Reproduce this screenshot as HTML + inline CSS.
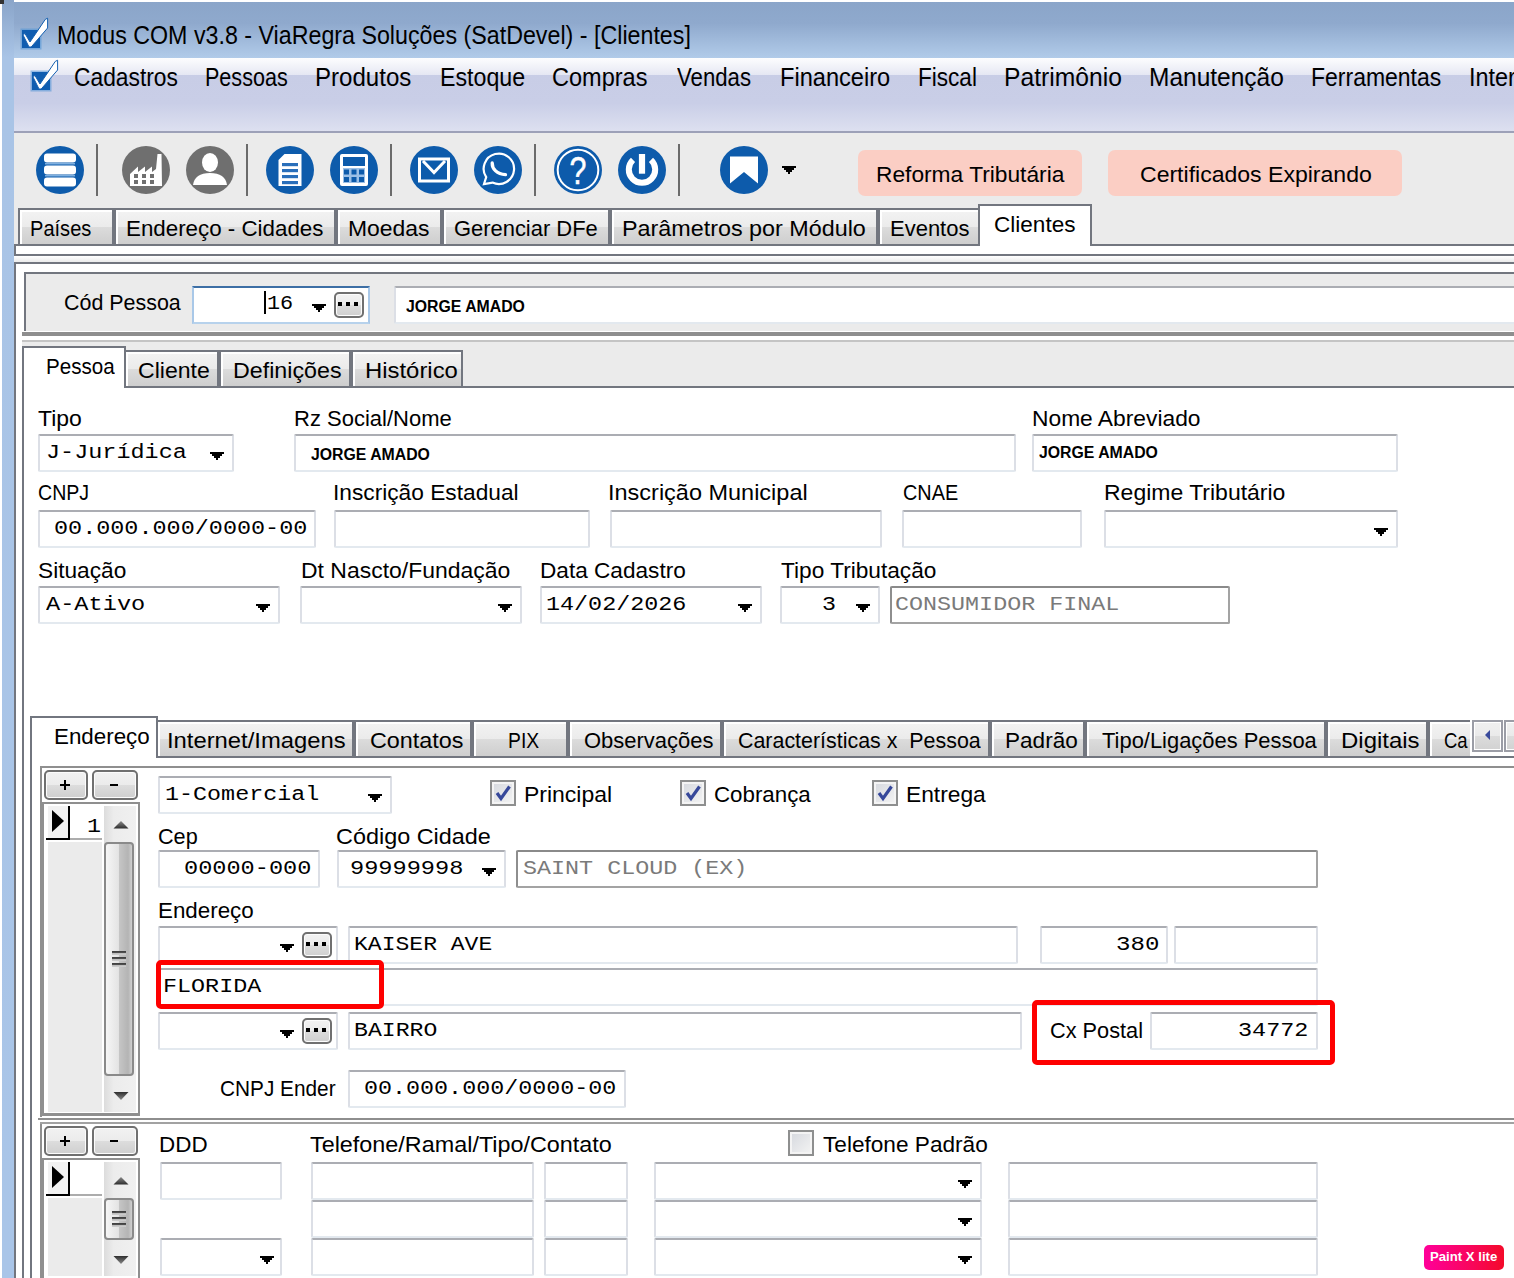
<!DOCTYPE html>
<html><head><meta charset="utf-8"><title>Clientes</title><style>
html,body{margin:0;padding:0}
body{width:1514px;height:1278px;position:relative;overflow:hidden;background:#fff;font-family:"Liberation Sans",sans-serif;color:#000}
.a{position:absolute;box-sizing:border-box}
.t{position:absolute;white-space:pre;line-height:1;transform-origin:0 0}
.f{position:absolute;box-sizing:border-box;background:#fff;border-radius:2px;border:2px solid #dcdfe6;border-top-color:#abadb3;border-bottom-color:#e3e9ef}
.fd{position:absolute;box-sizing:border-box;background:#fff;border-radius:2px;border:2px solid #a3a3a3;border-top-color:#8a8a8a;border-left-color:#8e8e8e}
.tab{position:absolute;box-sizing:border-box;border:2px solid #72767f;border-bottom:none;background:linear-gradient(#f3f3f3 0,#ebebeb 50%,#dcdcdc 50%,#cecece 100%);box-shadow:inset 2px 2px 0 #fff}
.tabon{position:absolute;box-sizing:border-box;border:2px solid #72767f;border-bottom:none;background:#fff}
.btn{position:absolute;box-sizing:border-box;border:2px solid #707070;border-radius:5px;background:linear-gradient(#f2f2f2 0,#ebebeb 50%,#dddddd 50%,#cfcfcf 100%);box-shadow:inset 0 0 0 1px #fcfcfc}
.ar{position:absolute;width:0;height:0;border-left:7px solid transparent;border-right:7px solid transparent;border-top:7px solid #000}
.ar:before{content:"";position:absolute;left:-7px;top:-8px;width:14px;height:2px;background:#000}
.cb{position:absolute;box-sizing:border-box;width:26px;height:26px;border:2px solid #8e8f8f;background:linear-gradient(135deg,#d5d8de,#f4f4f4);box-shadow:inset 0 0 0 2px #f4f4f4}
</style></head><body>
<div class="a" style="left:0px;top:0px;width:1514px;height:58px;background:linear-gradient(#8aa5c9 0,#8fa9cd 40%,#a6c0e0 80%,#b1cbe9 100%)"></div>
<div class="a" style="left:0px;top:0px;width:1514px;height:2px;background:#fff"></div>
<div class="a" style="left:0px;top:0px;width:14px;height:1278px;background:linear-gradient(#8aa5c9 0,#a9c4e6 58px,#a9c5e8 100%)"></div>
<div class="a" style="left:0px;top:0px;width:2px;height:1278px;background:#fff"></div>
<div class="a" style="left:0px;top:0px;width:4px;height:4px;background:#333"></div>
<div class="a" style="left:14px;top:58px;width:1500px;height:75px;background:linear-gradient(#fdfdfe 0,#e5e7f3 17px,#c8cde6 17px,#c9cee7 45px,#dde0f0 73px,#9da1b8 73px,#9da1b8 75px)"></div>
<div class="a" style="left:14px;top:133px;width:1500px;height:112px;background:#ebebeb"></div>
<svg class="a" style="left:18px;top:16px" width="34" height="36" viewBox="-4 -14 34 36">
<rect x="-1.5" y="-1.5" width="21" height="21" fill="#4f93d6" opacity="0.55"/>
<rect x="0" y="0" width="18" height="18" fill="#0f5db0"/>
<path d="M0.8 4.6 L3 3.6 L8 12 L23.3 -10.6 L25.6 -11.8 L25.6 -2 L9.2 17 L7 17 Z" fill="#fff" stroke="#1560b0" stroke-width="1"/>
</svg>
<svg class="a" style="left:28px;top:58px" width="34" height="36" viewBox="-4 -14 34 36">
<rect x="-1.5" y="-1.5" width="21" height="21" fill="#4f93d6" opacity="0.55"/>
<rect x="0" y="0" width="18" height="18" fill="#0f5db0"/>
<path d="M0.8 4.6 L3 3.6 L8 12 L23.3 -10.6 L25.6 -11.8 L25.6 -2 L9.2 17 L7 17 Z" fill="#fff" stroke="#1560b0" stroke-width="1"/>
</svg>
<div class="t" style="left:57.21px;top:22px;font-size:26px;transform:scaleX(0.8940);">Modus COM v3.8 - ViaRegra Soluções (SatDevel) - [Clientes]</div>
<div class="t" style="left:74.12px;top:64px;font-size:26px;transform:scaleX(0.8766);">Cadastros</div>
<div class="t" style="left:204.84px;top:64px;font-size:26px;transform:scaleX(0.8289);">Pessoas</div>
<div class="t" style="left:315.15px;top:64px;font-size:26px;transform:scaleX(0.9259);">Produtos</div>
<div class="t" style="left:439.71px;top:64px;font-size:26px;transform:scaleX(0.8930);">Estoque</div>
<div class="t" style="left:552.10px;top:64px;font-size:26px;transform:scaleX(0.9045);">Compras</div>
<div class="t" style="left:677.00px;top:64px;font-size:26px;transform:scaleX(0.8531);">Vendas</div>
<div class="t" style="left:779.68px;top:64px;font-size:26px;transform:scaleX(0.9081);">Financeiro</div>
<div class="t" style="left:917.76px;top:64px;font-size:26px;transform:scaleX(0.8677);">Fiscal</div>
<div class="t" style="left:1003.60px;top:64px;font-size:26px;transform:scaleX(0.9482);">Patrimônio</div>
<div class="t" style="left:1149.12px;top:64px;font-size:26px;transform:scaleX(0.9421);">Manutenção</div>
<div class="t" style="left:1311.23px;top:64px;font-size:26px;transform:scaleX(0.8839);">Ferramentas</div>
<div class="t" style="left:1468.70px;top:64px;font-size:26px;transform:scaleX(0.9004);">Interfaces</div>
<svg class="a" style="left:36px;top:146px" width="48" height="48" viewBox="0 0 48 48"><circle cx="24" cy="24" r="24" fill="#0d5bab"/><rect x="8" y="7.5" width="32" height="9" rx="3" fill="#fff"/><rect x="8" y="19.5" width="32" height="9" rx="3" fill="#fff"/><rect x="8" y="31.5" width="32" height="9" rx="3" fill="#fff"/><rect x="9" y="17" width="30" height="1.5" fill="#7fb0e0"/><rect x="9" y="29" width="30" height="1.5" fill="#7fb0e0"/></svg>
<svg class="a" style="left:122px;top:146px" width="48" height="48" viewBox="0 0 48 48"><circle cx="24" cy="24" r="24" fill="#6f6f6f"/><path d="M8 40 V28 L16 20.5 V26 L23 20.5 V26 L30 20.5 V26 L34 23 L35.5 8 H39.5 L40 40 Z" fill="#fff"/><rect x="12" y="28" width="4" height="4" fill="#6f6f6f"/><rect x="12" y="34" width="4" height="4" fill="#6f6f6f"/><rect x="20" y="28" width="4" height="4" fill="#6f6f6f"/><rect x="20" y="34" width="4" height="4" fill="#6f6f6f"/><rect x="28" y="28" width="4" height="4" fill="#6f6f6f"/><rect x="28" y="34" width="4" height="4" fill="#6f6f6f"/></svg>
<svg class="a" style="left:186px;top:146px" width="48" height="48" viewBox="0 0 48 48"><circle cx="24" cy="24" r="24" fill="#6f6f6f"/><ellipse cx="24" cy="16.5" rx="8" ry="9.5" fill="#fff"/><path d="M7 39 C8 31 14 27 24 27 C34 27 40 31 41 39 Z" fill="#fff"/></svg>
<svg class="a" style="left:266px;top:146px" width="48" height="48" viewBox="0 0 48 48"><circle cx="24" cy="24" r="24" fill="#0d5bab"/><path d="M12.5 40 V14 L18.5 8 H35.5 V40 Z" fill="#fff"/><rect x="16" y="17" width="16" height="3.2" fill="#2a6fba"/><rect x="16" y="23" width="16" height="3.2" fill="#2a6fba"/><rect x="16" y="29" width="16" height="3.2" fill="#2a6fba"/><rect x="16" y="35" width="16" height="3.2" fill="#2a6fba"/></svg>
<svg class="a" style="left:330px;top:146px" width="48" height="48" viewBox="0 0 48 48"><circle cx="24" cy="24" r="24" fill="#0d5bab"/><rect x="10" y="8" width="28" height="32" rx="2" fill="#fff"/><rect x="13" y="11" width="22" height="9" fill="#0d5bab"/><rect x="13" y="22" width="22" height="15" fill="#9cc0e6"/><rect x="14" y="23.5" width="5" height="5" fill="#0d5bab"/><rect x="14" y="31" width="5" height="5" fill="#0d5bab"/><rect x="21.5" y="23.5" width="5" height="5" fill="#0d5bab"/><rect x="21.5" y="31" width="5" height="5" fill="#0d5bab"/><rect x="29" y="23.5" width="5" height="5" fill="#0d5bab"/><rect x="29" y="31" width="5" height="5" fill="#0d5bab"/></svg>
<svg class="a" style="left:410px;top:146px" width="48" height="48" viewBox="0 0 48 48"><circle cx="24" cy="24" r="24" fill="#0d5bab"/><rect x="9.5" y="13" width="29" height="22" fill="none" stroke="#fff" stroke-width="3"/><path d="M13 15 L24 26.5 L35 15" fill="none" stroke="#fff" stroke-width="3"/></svg>
<svg class="a" style="left:474px;top:146px" width="48" height="48" viewBox="0 0 48 48"><circle cx="24" cy="24" r="24" fill="#0d5bab"/><path d="M10 38 L12.2 31.2 A15.2 15.2 0 1 1 18.5 36.6 Z" fill="none" stroke="#fff" stroke-width="2.2" stroke-linejoin="miter"/><path d="M18.2 17 C18 23 23 28.2 31.5 28.6" fill="none" stroke="#fff" stroke-width="3.3" stroke-linecap="round"/></svg>
<svg class="a" style="left:554px;top:146px" width="48" height="48" viewBox="0 0 48 48"><circle cx="24" cy="24" r="24" fill="#0d5bab"/><circle cx="24" cy="24" r="20.3" fill="none" stroke="#fff" stroke-width="2"/><text transform="translate(24 37.5) scale(0.8 1)" x="0" y="0" text-anchor="middle" font-family="Liberation Sans, sans-serif" font-size="38" fill="#fff" stroke="#fff" stroke-width="0.5">?</text></svg>
<svg class="a" style="left:618px;top:146px" width="48" height="48" viewBox="0 0 48 48"><circle cx="24" cy="24" r="24" fill="#0d5bab"/><path d="M15 13.9 A13.2 13.2 0 1 0 33 13.9" fill="none" stroke="#fff" stroke-width="6" stroke-linecap="butt"/><rect x="20.9" y="8" width="6.2" height="19.7" fill="#fff"/></svg>
<svg class="a" style="left:720px;top:146px" width="48" height="48" viewBox="0 0 48 48"><circle cx="24" cy="24" r="24" fill="#0d5bab"/><path d="M10 10.5 H38 V37.5 L24 26 L10 37.5 Z" fill="#fff"/></svg>
<div class="a" style="left:96px;top:144px;width:2px;height:52px;background:#6b6b6b"></div>
<div class="a" style="left:246px;top:144px;width:2px;height:52px;background:#6b6b6b"></div>
<div class="a" style="left:390px;top:144px;width:2px;height:52px;background:#6b6b6b"></div>
<div class="a" style="left:534px;top:144px;width:2px;height:52px;background:#6b6b6b"></div>
<div class="a" style="left:678px;top:144px;width:2px;height:52px;background:#6b6b6b"></div>
<svg class="a" style="left:782px;top:166px" width="14" height="8"><path d="M0 0H14V2H12V4H10V6H8V8H6V6H4V4H2V2H0Z" fill="#000"/></svg>
<div class="a" style="left:858px;top:150px;width:224px;height:46px;background:#fbcec4;border-radius:7px"></div>
<div class="a" style="left:1108px;top:150px;width:294px;height:46px;background:#fbcec4;border-radius:7px"></div>
<div class="t" style="left:876.01px;top:163px;font-size:23px;transform:scale(0.9890,0.94);transform-origin:0 19px;">Reforma Tributária</div>
<div class="t" style="left:1140.00px;top:163px;font-size:23px;transform:scale(1.0017,0.94);transform-origin:0 19px;">Certificados Expirando</div>
<div class="tab" style="left:18px;top:208px;width:96px;height:36px"></div>
<div class="t" style="left:30.13px;top:217px;font-size:23px;transform:scale(0.8719,0.94);transform-origin:0 19px;">Países</div>
<div class="tab" style="left:114px;top:208px;width:222px;height:36px"></div>
<div class="t" style="left:126.03px;top:217px;font-size:23px;transform:scale(0.9713,0.94);transform-origin:0 19px;">Endereço - Cidades</div>
<div class="tab" style="left:336px;top:208px;width:106px;height:36px"></div>
<div class="t" style="left:348.00px;top:217px;font-size:23px;transform:scale(0.9960,0.94);transform-origin:0 19px;">Moedas</div>
<div class="tab" style="left:442px;top:208px;width:168px;height:36px"></div>
<div class="t" style="left:454.05px;top:217px;font-size:23px;transform:scale(0.9528,0.94);transform-origin:0 19px;">Gerenciar DFe</div>
<div class="tab" style="left:610px;top:208px;width:268px;height:36px"></div>
<div class="t" style="left:621.99px;top:217px;font-size:23px;transform:scale(1.0145,0.94);transform-origin:0 19px;">Parâmetros por Módulo</div>
<div class="tab" style="left:878px;top:208px;width:102px;height:36px"></div>
<div class="t" style="left:890.04px;top:217px;font-size:23px;transform:scale(0.9558,0.94);transform-origin:0 19px;">Eventos</div>
<div class="a" style="left:14px;top:244px;width:1510px;height:12px;background:#fff;border:2px solid #72767f"></div>
<div class="tabon" style="left:978px;top:204px;width:114px;height:42px"></div>
<div class="t" style="left:994.02px;top:213px;font-size:23px;transform:scale(0.9805,0.94);transform-origin:0 19px;">Clientes</div>
<div class="a" style="left:14px;top:256px;width:1500px;height:6px;background:linear-gradient(#fff,#ebebeb)"></div>
<div class="a" style="left:14px;top:262px;width:1510px;height:1030px;background:#fff;border:2px solid #72767f"></div>
<div class="a" style="left:24px;top:272px;width:1500px;height:59px;background:#ebebeb;border:2px solid #72767f;border-bottom:none;border-right:none"></div>
<div class="t" style="left:64.07px;top:291px;font-size:23px;transform:scale(0.9317,0.94);transform-origin:0 19px;">Cód Pessoa</div>
<div class="a" style="left:192px;top:286px;width:178px;height:38px;background:#fff;border:2px solid #a9c8e8;border-top-color:#3d6fa5;border-bottom-color:#b7d2ec"></div>
<div class="t" style="left:267.01px;top:293px;font-size:22px;font-family:'Liberation Mono', monospace;transform:scale(0.9916,0.935);transform-origin:0 16px;">16</div>
<div class="a" style="left:264px;top:291px;width:2px;height:23px;background:#000"></div>
<svg class="a" style="left:312px;top:304px" width="14" height="8"><path d="M0 0H14V2H12V4H10V6H8V8H6V6H4V4H2V2H0Z" fill="#000"/></svg>
<div class="btn" style="left:334px;top:292px;width:30px;height:26px"><div class="a" style="left:2.0px;top:8.0px;width:4px;height:4px;background:#000"></div><div class="a" style="left:10.0px;top:8.0px;width:4px;height:4px;background:#000"></div><div class="a" style="left:18.0px;top:8.0px;width:4px;height:4px;background:#000"></div></div>
<div class="f" style="left:394px;top:286px;width:1136px;height:38px"></div>
<div class="t" style="left:406.00px;top:299px;font-size:16px;font-weight:bold;transform:scaleX(0.9879);">JORGE AMADO</div>
<div class="a" style="left:22px;top:332px;width:1500px;height:4px;background:#8e8e8e"></div>
<div class="a" style="left:22px;top:340px;width:1500px;height:2px;background:#c4c4c4"></div>
<div class="a" style="left:22px;top:342px;width:1500px;height:46px;background:#ebebeb"></div>
<div class="a" style="left:22px;top:386px;width:1500px;height:900px;background:#fff;border:2px solid #72767f;border-right:none"></div>
<div class="tab" style="left:124px;top:350px;width:95px;height:36px"></div>
<div class="t" style="left:138.00px;top:359px;font-size:23px;transform:scale(1.0028,0.94);transform-origin:0 19px;">Cliente</div>
<div class="tab" style="left:219px;top:350px;width:132px;height:36px"></div>
<div class="t" style="left:232.99px;top:359px;font-size:23px;transform:scale(1.0105,0.94);transform-origin:0 19px;">Definições</div>
<div class="tab" style="left:351px;top:350px;width:112px;height:36px"></div>
<div class="t" style="left:364.96px;top:359px;font-size:23px;transform:scale(1.0380,0.94);transform-origin:0 19px;">Histórico</div>
<div class="tabon" style="left:22px;top:346px;width:104px;height:42px"></div>
<div class="t" style="left:46.10px;top:355px;font-size:23px;transform:scale(0.8956,0.94);transform-origin:0 19px;">Pessoa</div>
<div class="t" style="left:38.00px;top:407px;font-size:23px;transform:scale(0.9977,0.94);transform-origin:0 19px;">Tipo</div>
<div class="f" style="left:38px;top:434px;width:196px;height:38px"></div>
<div class="t" style="left:45.93px;top:442px;font-size:22px;font-family:'Liberation Mono', monospace;transform:scale(1.0664,0.935);transform-origin:0 16px;">J-Jurídica</div>
<svg class="a" style="left:210px;top:452px" width="14" height="8"><path d="M0 0H14V2H12V4H10V6H8V8H6V6H4V4H2V2H0Z" fill="#000"/></svg>
<div class="t" style="left:294.04px;top:407px;font-size:23px;transform:scale(0.9565,0.94);transform-origin:0 19px;">Rz Social/Nome</div>
<div class="f" style="left:294px;top:434px;width:722px;height:38px"></div>
<div class="t" style="left:311.00px;top:447px;font-size:16px;font-weight:bold;transform:scaleX(0.9879);">JORGE AMADO</div>
<div class="t" style="left:1032.01px;top:407px;font-size:23px;transform:scale(0.9910,0.94);transform-origin:0 19px;">Nome Abreviado</div>
<div class="f" style="left:1032px;top:434px;width:366px;height:38px"></div>
<div class="t" style="left:1039.00px;top:445px;font-size:16px;font-weight:bold;transform:scaleX(0.9879);">JORGE AMADO</div>
<div class="t" style="left:38.15px;top:481px;font-size:23px;transform:scale(0.8513,0.94);transform-origin:0 19px;">CNPJ</div>
<div class="f" style="left:38px;top:510px;width:278px;height:38px"></div>
<div class="t" style="left:53.93px;top:518px;font-size:22px;font-family:'Liberation Mono', monospace;transform:scale(1.0661,0.935);transform-origin:0 16px;">00.000.000/0000-00</div>
<div class="t" style="left:332.53px;top:481px;font-size:23px;transform:scale(0.9874,0.94);transform-origin:0 19px;">Inscrição Estadual</div>
<div class="f" style="left:334px;top:510px;width:256px;height:38px"></div>
<div class="t" style="left:608.46px;top:481px;font-size:23px;transform:scale(1.0209,0.94);transform-origin:0 19px;">Inscrição Municipal</div>
<div class="f" style="left:610px;top:510px;width:272px;height:38px"></div>
<div class="t" style="left:903.14px;top:481px;font-size:23px;transform:scale(0.8632,0.94);transform-origin:0 19px;">CNAE</div>
<div class="f" style="left:902px;top:510px;width:180px;height:38px"></div>
<div class="t" style="left:1104.00px;top:481px;font-size:23px;transform:scale(0.9992,0.94);transform-origin:0 19px;">Regime Tributário</div>
<div class="f" style="left:1104px;top:510px;width:294px;height:38px"></div>
<svg class="a" style="left:1374px;top:528px" width="14" height="8"><path d="M0 0H14V2H12V4H10V6H8V8H6V6H4V4H2V2H0Z" fill="#000"/></svg>
<div class="t" style="left:37.51px;top:559px;font-size:23px;transform:scale(0.9861,0.94);transform-origin:0 19px;">Situação</div>
<div class="f" style="left:38px;top:586px;width:242px;height:38px"></div>
<div class="t" style="left:46.00px;top:594px;font-size:22px;font-family:'Liberation Mono', monospace;transform:scale(1.0744,0.935);transform-origin:0 16px;">A-Ativo</div>
<svg class="a" style="left:256px;top:604px" width="14" height="8"><path d="M0 0H14V2H12V4H10V6H8V8H6V6H4V4H2V2H0Z" fill="#000"/></svg>
<div class="t" style="left:300.50px;top:559px;font-size:23px;transform:scale(0.9982,0.94);transform-origin:0 19px;">Dt Nascto/Fundação</div>
<div class="f" style="left:300px;top:586px;width:222px;height:38px"></div>
<svg class="a" style="left:498px;top:604px" width="14" height="8"><path d="M0 0H14V2H12V4H10V6H8V8H6V6H4V4H2V2H0Z" fill="#000"/></svg>
<div class="t" style="left:540.02px;top:559px;font-size:23px;transform:scale(0.9829,0.94);transform-origin:0 19px;">Data Cadastro</div>
<div class="f" style="left:540px;top:586px;width:222px;height:38px"></div>
<div class="t" style="left:545.94px;top:594px;font-size:22px;font-family:'Liberation Mono', monospace;transform:scale(1.0630,0.935);transform-origin:0 16px;">14/02/2026</div>
<svg class="a" style="left:738px;top:604px" width="14" height="8"><path d="M0 0H14V2H12V4H10V6H8V8H6V6H4V4H2V2H0Z" fill="#000"/></svg>
<div class="t" style="left:781.00px;top:559px;font-size:23px;transform:scale(0.9854,0.94);transform-origin:0 19px;">Tipo Tributação</div>
<div class="f" style="left:780px;top:586px;width:100px;height:38px"></div>
<div class="t" style="left:821.94px;top:594px;font-size:22px;font-family:'Liberation Mono', monospace;transform:scale(1.0600,0.935);transform-origin:0 16px;">3</div>
<svg class="a" style="left:856px;top:604px" width="14" height="8"><path d="M0 0H14V2H12V4H10V6H8V8H6V6H4V4H2V2H0Z" fill="#000"/></svg>
<div class="fd" style="left:890px;top:586px;width:340px;height:38px"></div>
<div class="t" style="left:894.94px;top:594px;font-size:22px;color:#7a7a7a;font-family:'Liberation Mono', monospace;transform:scale(1.0620,0.935);transform-origin:0 16px;">CONSUMIDOR FINAL</div>
<div class="a" style="left:30px;top:756px;width:1500px;height:600px;background:#fff;border:2px solid #72767f;border-right:none"></div>
<div class="tab" style="left:156px;top:720px;width:198px;height:36px"></div>
<div class="t" style="left:166.93px;top:729px;font-size:23px;transform:scale(1.0347,0.94);transform-origin:0 19px;">Internet/Imagens</div>
<div class="tab" style="left:354px;top:720px;width:118px;height:36px"></div>
<div class="t" style="left:369.98px;top:729px;font-size:23px;transform:scale(1.0159,0.94);transform-origin:0 19px;">Contatos</div>
<div class="tab" style="left:472px;top:720px;width:96px;height:36px"></div>
<div class="t" style="left:508.16px;top:729px;font-size:23px;transform:scale(0.8396,0.94);transform-origin:0 19px;">PIX</div>
<div class="tab" style="left:568px;top:720px;width:154px;height:36px"></div>
<div class="t" style="left:584.04px;top:729px;font-size:23px;transform:scale(0.9552,0.94);transform-origin:0 19px;">Observações</div>
<div class="tab" style="left:722px;top:720px;width:268px;height:36px"></div>
<div class="t" style="left:738.07px;top:729px;font-size:23px;transform:scale(0.9309,0.94);transform-origin:0 19px;">Características x  Pessoa</div>
<div class="tab" style="left:990px;top:720px;width:95px;height:36px"></div>
<div class="t" style="left:1005.02px;top:729px;font-size:23px;transform:scale(0.9810,0.94);transform-origin:0 19px;">Padrão</div>
<div class="tab" style="left:1085px;top:720px;width:241px;height:36px"></div>
<div class="t" style="left:1102.00px;top:729px;font-size:23px;transform:scale(0.9528,0.94);transform-origin:0 19px;">Tipo/Ligações Pessoa</div>
<div class="tab" style="left:1326px;top:720px;width:102px;height:36px"></div>
<div class="t" style="left:1340.96px;top:729px;font-size:23px;transform:scale(1.0418,0.94);transform-origin:0 19px;">Digitais</div>
<div class="tab" style="left:1428px;top:720px;width:52px;height:36px"></div>
<div class="t" style="left:1444.20px;top:729px;font-size:23px;transform:scale(0.8039,0.94);transform-origin:0 19px;">Ca</div>
<div class="a" style="left:1470px;top:718px;width:44px;height:38px;background:#fff"></div>
<div class="a" style="left:1470px;top:756px;width:44px;height:2px;background:#72767f"></div>
<div class="a" style="left:1472px;top:720px;width:31px;height:32px;background:linear-gradient(#f0f0f0 0,#eaeaea 50%,#dcdcdc 50%,#d2d2d2 100%);border:2px solid #9b9da6;box-shadow:inset 0 0 0 1px #fff"></div>
<div class="a" style="left:1504px;top:720px;width:31px;height:32px;background:linear-gradient(#f0f0f0 0,#eaeaea 50%,#dcdcdc 50%,#d2d2d2 100%);border:2px solid #9b9da6;box-shadow:inset 0 0 0 1px #fff"></div>
<svg class="a" style="left:1485px;top:730px" width="6" height="10"><path d="M0 5 L5 0 V10 Z" fill="#3a4b9c"/></svg>
<div class="tabon" style="left:30px;top:716px;width:128px;height:42px"></div>
<div class="t" style="left:54.03px;top:725px;font-size:23px;transform:scale(0.9724,0.94);transform-origin:0 19px;">Endereço</div>
<div class="a" style="left:40px;top:766px;width:1500px;height:351px;background:#fff;border-left:2px solid #8f8f8f;border-top:2px solid #8f8f8f"></div>
<div class="btn" style="left:44px;top:770px;width:44px;height:30px"></div>
<div class="btn" style="left:92px;top:770px;width:46px;height:30px"></div>
<div class="a" style="left:60px;top:784px;width:10px;height:2px;background:#000"></div>
<div class="a" style="left:64px;top:780px;width:2px;height:10px;background:#000"></div>
<div class="a" style="left:110px;top:784px;width:8px;height:2px;background:#000"></div>
<div class="a" style="left:42px;top:802px;width:98px;height:314px;background:#fff;border-top:2px solid #8f8f8f;border-left:2px solid #8f8f8f;border-right:2px solid #8f8f8f;border-bottom:3px solid #8f8f8f;"></div>
<div class="a" style="left:48px;top:842px;width:54px;height:270px;background:#ebebeb"></div>
<div class="a" style="left:70px;top:838px;width:32px;height:2px;background:#acacac"></div>
<div class="a" style="left:48px;top:806px;width:20px;height:32px;background:#f2f2f2"></div>
<div class="a" style="left:68px;top:806px;width:2px;height:34px;background:#000"></div>
<div class="a" style="left:46px;top:838px;width:24px;height:2px;background:#000"></div>
<svg class="a" style="left:52px;top:810px" width="12" height="22"><path d="M0 0 L12 11 L0 22 Z" fill="#000"/></svg>
<div class="t" style="left:87.44px;top:816px;font-size:22px;font-family:'Liberation Mono', monospace;transform:scale(1.0600,0.935);transform-origin:0 16px;">1</div>
<div class="a" style="left:104px;top:806px;width:32px;height:306px;background:linear-gradient(90deg,#dcdcdc,#ececec 30%,#f0f0f0)"></div>
<svg class="a" style="left:113px;top:820px" width="16" height="9" viewBox="0 0 16 9"><defs><linearGradient id="ga802" x1="0" y1="0" x2="0" y2="1"><stop offset="0" stop-color="#8a8a8a"/><stop offset="1" stop-color="#2e2e2e"/></linearGradient></defs><path d="M0.5 8.5 L8 1 L15.5 8.5 Z" fill="url(#ga802)"/></svg>
<svg class="a" style="left:113px;top:1092px" width="16" height="9" viewBox="0 0 16 9"><defs><linearGradient id="gb802" x1="0" y1="0" x2="0" y2="1"><stop offset="0" stop-color="#2e2e2e"/><stop offset="1" stop-color="#8a8a8a"/></linearGradient></defs><path d="M0.5 0 L8 8 L15.5 0 Z" fill="url(#gb802)"/></svg>
<div class="a" style="left:104px;top:842px;width:30px;height:234px;border:2px solid #8a8a8a;border-radius:4px;background:linear-gradient(90deg,#f6f6f6 0,#e4e4e4 48%,#c6c6c6 50%,#b4b4b4 85%,#d0d0d0 100%);"><div class="a" style="left:6px;top:107px;width:14px;height:4px;background:linear-gradient(#3c3c3c 0,#555 50%,#b9b9b9 50%,#d0d0d0 100%)"></div><div class="a" style="left:6px;top:113px;width:14px;height:4px;background:linear-gradient(#3c3c3c 0,#555 50%,#b9b9b9 50%,#d0d0d0 100%)"></div><div class="a" style="left:6px;top:119px;width:14px;height:4px;background:linear-gradient(#3c3c3c 0,#555 50%,#b9b9b9 50%,#d0d0d0 100%)"></div></div>
<div class="f" style="left:158px;top:776px;width:234px;height:38px"></div>
<div class="t" style="left:164.94px;top:784px;font-size:22px;font-family:'Liberation Mono', monospace;transform:scale(1.0628,0.935);transform-origin:0 16px;">1-Comercial</div>
<svg class="a" style="left:368px;top:794px" width="14" height="8"><path d="M0 0H14V2H12V4H10V6H8V8H6V6H4V4H2V2H0Z" fill="#000"/></svg>
<div class="cb" style="left:490px;top:780px"><svg class="a" style="left:2px;top:2px" width="18" height="18" viewBox="0 0 18 18"><path d="M3 9 L7 14.5 L15.5 2.5" fill="none" stroke="#36489a" stroke-width="3.2"/></svg></div>
<div class="t" style="left:524.00px;top:783px;font-size:23px;transform:scale(0.9989,0.94);transform-origin:0 19px;">Principal</div>
<div class="cb" style="left:680px;top:780px"><svg class="a" style="left:2px;top:2px" width="18" height="18" viewBox="0 0 18 18"><path d="M3 9 L7 14.5 L15.5 2.5" fill="none" stroke="#36489a" stroke-width="3.2"/></svg></div>
<div class="t" style="left:714.03px;top:783px;font-size:23px;transform:scale(0.9703,0.94);transform-origin:0 19px;">Cobrança</div>
<div class="cb" style="left:872px;top:780px"><svg class="a" style="left:2px;top:2px" width="18" height="18" viewBox="0 0 18 18"><path d="M3 9 L7 14.5 L15.5 2.5" fill="none" stroke="#36489a" stroke-width="3.2"/></svg></div>
<div class="t" style="left:906.01px;top:783px;font-size:23px;transform:scale(0.9904,0.94);transform-origin:0 19px;">Entrega</div>
<div class="t" style="left:158.06px;top:825px;font-size:23px;transform:scale(0.9406,0.94);transform-origin:0 19px;">Cep</div>
<div class="f" style="left:158px;top:850px;width:162px;height:38px"></div>
<div class="t" style="left:183.93px;top:858px;font-size:22px;font-family:'Liberation Mono', monospace;transform:scale(1.0719,0.935);transform-origin:0 16px;">00000-000</div>
<div class="t" style="left:335.98px;top:825px;font-size:23px;transform:scale(1.0175,0.94);transform-origin:0 19px;">Código Cidade</div>
<div class="f" style="left:337px;top:850px;width:169px;height:38px"></div>
<div class="t" style="left:349.93px;top:858px;font-size:22px;font-family:'Liberation Mono', monospace;transform:scale(1.0733,0.935);transform-origin:0 16px;">99999998</div>
<svg class="a" style="left:482px;top:868px" width="14" height="8"><path d="M0 0H14V2H12V4H10V6H8V8H6V6H4V4H2V2H0Z" fill="#000"/></svg>
<div class="fd" style="left:516px;top:850px;width:802px;height:38px"></div>
<div class="t" style="left:523.00px;top:858px;font-size:22px;color:#7a7a7a;font-family:'Liberation Mono', monospace;transform:scale(1.0623,0.935);transform-origin:0 16px;">SAINT CLOUD (EX)</div>
<div class="t" style="left:158.03px;top:899px;font-size:23px;transform:scale(0.9724,0.94);transform-origin:0 19px;">Endereço</div>
<div class="f" style="left:158px;top:926px;width:180px;height:38px"></div>
<svg class="a" style="left:280px;top:944px" width="14" height="8"><path d="M0 0H14V2H12V4H10V6H8V8H6V6H4V4H2V2H0Z" fill="#000"/></svg>
<div class="btn" style="left:302px;top:932px;width:30px;height:26px"><div class="a" style="left:2.0px;top:8.0px;width:4px;height:4px;background:#000"></div><div class="a" style="left:10.0px;top:8.0px;width:4px;height:4px;background:#000"></div><div class="a" style="left:18.0px;top:8.0px;width:4px;height:4px;background:#000"></div></div>
<div class="f" style="left:348px;top:926px;width:670px;height:38px"></div>
<div class="t" style="left:353.95px;top:934px;font-size:22px;font-family:'Liberation Mono', monospace;transform:scale(1.0472,0.935);transform-origin:0 16px;">KAISER AVE</div>
<div class="f" style="left:1040px;top:926px;width:128px;height:38px"></div>
<div class="t" style="left:1115.90px;top:934px;font-size:22px;font-family:'Liberation Mono', monospace;transform:scale(1.0961,0.935);transform-origin:0 16px;">380</div>
<div class="f" style="left:1174px;top:926px;width:144px;height:38px"></div>
<div class="f" style="left:158px;top:968px;width:1160px;height:38px"></div>
<div class="t" style="left:162.87px;top:976px;font-size:22px;font-family:'Liberation Mono', monospace;transform:scale(1.0634,0.935);transform-origin:0 16px;">FLORIDA</div>
<div class="f" style="left:158px;top:1012px;width:180px;height:38px"></div>
<svg class="a" style="left:280px;top:1030px" width="14" height="8"><path d="M0 0H14V2H12V4H10V6H8V8H6V6H4V4H2V2H0Z" fill="#000"/></svg>
<div class="btn" style="left:302px;top:1018px;width:30px;height:26px"><div class="a" style="left:2.0px;top:8.0px;width:4px;height:4px;background:#000"></div><div class="a" style="left:10.0px;top:8.0px;width:4px;height:4px;background:#000"></div><div class="a" style="left:18.0px;top:8.0px;width:4px;height:4px;background:#000"></div></div>
<div class="f" style="left:348px;top:1012px;width:674px;height:38px"></div>
<div class="t" style="left:353.95px;top:1020px;font-size:22px;font-family:'Liberation Mono', monospace;transform:scale(1.0511,0.935);transform-origin:0 16px;">BAIRRO</div>
<div class="t" style="left:1050.06px;top:1019px;font-size:23px;transform:scale(0.9448,0.94);transform-origin:0 19px;">Cx Postal</div>
<div class="f" style="left:1150px;top:1012px;width:168px;height:38px"></div>
<div class="t" style="left:1237.93px;top:1020px;font-size:22px;font-family:'Liberation Mono', monospace;transform:scale(1.0657,0.935);transform-origin:0 16px;">34772</div>
<div class="t" style="left:220.10px;top:1077px;font-size:23px;transform:scale(0.9043,0.94);transform-origin:0 19px;">CNPJ Ender</div>
<div class="f" style="left:348px;top:1070px;width:278px;height:38px"></div>
<div class="t" style="left:363.94px;top:1078px;font-size:22px;font-family:'Liberation Mono', monospace;transform:scale(1.0619,0.935);transform-origin:0 16px;">00.000.000/0000-00</div>
<div class="a" style="left:156px;top:960px;width:228px;height:49px;border:5px solid #fe0000;border-radius:5px"></div>
<div class="a" style="left:1032px;top:1000px;width:303px;height:65px;border:5px solid #fe0000;border-radius:5px"></div>
<div class="a" style="left:38px;top:1118px;width:1500px;height:2px;background:#8e8e8e"></div>
<div class="a" style="left:40px;top:1122px;width:1500px;height:200px;background:#fff;border-left:2px solid #8f8f8f"></div>
<div class="a" style="left:40px;top:1122px;width:1500px;height:2px;background:#a2a2a2"></div>
<div class="btn" style="left:44px;top:1126px;width:44px;height:30px"></div>
<div class="btn" style="left:92px;top:1126px;width:46px;height:30px"></div>
<div class="a" style="left:60px;top:1140px;width:10px;height:2px;background:#000"></div>
<div class="a" style="left:64px;top:1136px;width:2px;height:10px;background:#000"></div>
<div class="a" style="left:110px;top:1140px;width:8px;height:2px;background:#000"></div>
<div class="a" style="left:42px;top:1158px;width:98px;height:142px;background:#fff;border-top:2px solid #8f8f8f;border-left:2px solid #8f8f8f;border-right:2px solid #8f8f8f;"></div>
<div class="a" style="left:48px;top:1198px;width:54px;height:78px;background:#ebebeb"></div>
<div class="a" style="left:70px;top:1194px;width:32px;height:2px;background:#acacac"></div>
<div class="a" style="left:48px;top:1162px;width:20px;height:32px;background:#f2f2f2"></div>
<div class="a" style="left:68px;top:1162px;width:2px;height:34px;background:#000"></div>
<div class="a" style="left:46px;top:1194px;width:24px;height:2px;background:#000"></div>
<svg class="a" style="left:52px;top:1166px" width="12" height="22"><path d="M0 0 L12 11 L0 22 Z" fill="#000"/></svg>
<div class="a" style="left:104px;top:1162px;width:32px;height:114px;background:linear-gradient(90deg,#dcdcdc,#ececec 30%,#f0f0f0)"></div>
<svg class="a" style="left:113px;top:1176px" width="16" height="9" viewBox="0 0 16 9"><defs><linearGradient id="ga1158" x1="0" y1="0" x2="0" y2="1"><stop offset="0" stop-color="#8a8a8a"/><stop offset="1" stop-color="#2e2e2e"/></linearGradient></defs><path d="M0.5 8.5 L8 1 L15.5 8.5 Z" fill="url(#ga1158)"/></svg>
<svg class="a" style="left:113px;top:1256px" width="16" height="9" viewBox="0 0 16 9"><defs><linearGradient id="gb1158" x1="0" y1="0" x2="0" y2="1"><stop offset="0" stop-color="#2e2e2e"/><stop offset="1" stop-color="#8a8a8a"/></linearGradient></defs><path d="M0.5 0 L8 8 L15.5 0 Z" fill="url(#gb1158)"/></svg>
<div class="a" style="left:104px;top:1198px;width:30px;height:42px;border:2px solid #8a8a8a;border-radius:4px;background:linear-gradient(90deg,#f6f6f6 0,#e4e4e4 48%,#c6c6c6 50%,#b4b4b4 85%,#d0d0d0 100%);"><div class="a" style="left:6px;top:11px;width:14px;height:4px;background:linear-gradient(#3c3c3c 0,#555 50%,#b9b9b9 50%,#d0d0d0 100%)"></div><div class="a" style="left:6px;top:17px;width:14px;height:4px;background:linear-gradient(#3c3c3c 0,#555 50%,#b9b9b9 50%,#d0d0d0 100%)"></div><div class="a" style="left:6px;top:23px;width:14px;height:4px;background:linear-gradient(#3c3c3c 0,#555 50%,#b9b9b9 50%,#d0d0d0 100%)"></div></div>
<div class="t" style="left:159.03px;top:1133px;font-size:23px;transform:scale(0.9747,0.94);transform-origin:0 19px;">DDD</div>
<div class="t" style="left:310.00px;top:1133px;font-size:23px;transform:scale(1.0161,0.94);transform-origin:0 19px;">Telefone/Ramal/Tipo/Contato</div>
<div class="cb" style="left:788px;top:1130px"></div>
<div class="t" style="left:823.00px;top:1133px;font-size:23px;transform:scale(0.9837,0.94);transform-origin:0 19px;">Telefone Padrão</div>
<div class="f" style="left:160px;top:1162px;width:122px;height:38px"></div>
<div class="f" style="left:311px;top:1162px;width:223px;height:38px"></div>
<div class="f" style="left:544px;top:1162px;width:84px;height:38px"></div>
<div class="f" style="left:654px;top:1162px;width:328px;height:38px"></div>
<svg class="a" style="left:958px;top:1180px" width="14" height="8"><path d="M0 0H14V2H12V4H10V6H8V8H6V6H4V4H2V2H0Z" fill="#000"/></svg>
<div class="f" style="left:1008px;top:1162px;width:310px;height:38px"></div>
<div class="f" style="left:311px;top:1200px;width:223px;height:38px"></div>
<div class="f" style="left:544px;top:1200px;width:84px;height:38px"></div>
<div class="f" style="left:654px;top:1200px;width:328px;height:38px"></div>
<svg class="a" style="left:958px;top:1218px" width="14" height="8"><path d="M0 0H14V2H12V4H10V6H8V8H6V6H4V4H2V2H0Z" fill="#000"/></svg>
<div class="f" style="left:1008px;top:1200px;width:310px;height:38px"></div>
<div class="f" style="left:160px;top:1238px;width:122px;height:38px"></div>
<div class="f" style="left:311px;top:1238px;width:223px;height:38px"></div>
<div class="f" style="left:544px;top:1238px;width:84px;height:38px"></div>
<div class="f" style="left:654px;top:1238px;width:328px;height:38px"></div>
<svg class="a" style="left:958px;top:1256px" width="14" height="8"><path d="M0 0H14V2H12V4H10V6H8V8H6V6H4V4H2V2H0Z" fill="#000"/></svg>
<div class="f" style="left:1008px;top:1238px;width:310px;height:38px"></div>
<svg class="a" style="left:260px;top:1256px" width="14" height="8"><path d="M0 0H14V2H12V4H10V6H8V8H6V6H4V4H2V2H0Z" fill="#000"/></svg>
<div class="a" style="left:1424px;top:1245px;width:80px;height:25px;background:linear-gradient(90deg,#ff0099,#f8065a 60%,#f40a2a);border-radius:5px"></div>
<div class="t" style="left:1430.00px;top:1250px;font-size:13px;color:#fff;font-weight:bold;transform:scaleX(1.0116);">Paint X lite</div>
</body></html>
